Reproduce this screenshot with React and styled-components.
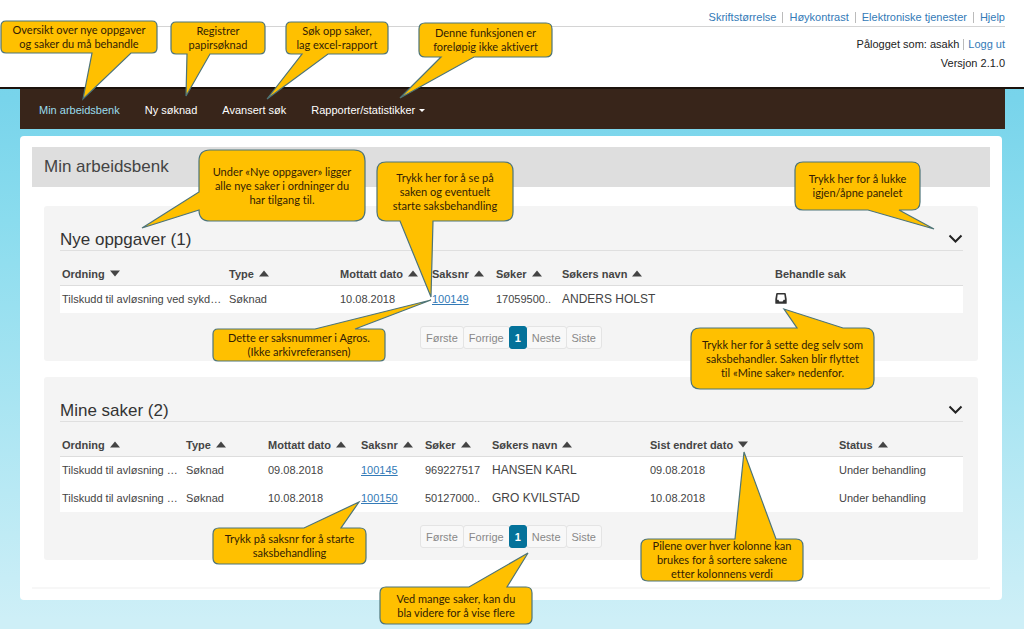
import React, { useState } from "react";
import styled, { createGlobalStyle } from "styled-components";

const GlobalStyle = createGlobalStyle`
  * {
    box-sizing: border-box;
  }

  body {
    margin: 0;
    font-family: "Liberation Sans", Arial, sans-serif;
    font-size: 11px;
    line-height: 14px;
    color: #222;
  }

  button {
    font: inherit;
    color: inherit;
    background: none;
    border: none;
    padding: 0;
    cursor: pointer;
  }
`;

// Hele siden, med blå bakgrunn under toppfeltet
const Page = styled.div`
  position: relative;
  display: flex;
  flex-direction: column;
  min-height: 100vh;
  overflow: hidden;
  background: linear-gradient(#74d2ea 0, #78d4eb 100px, #8adcee 220px, #ceeff7 620px);
`;

// Toppfelt
const Header = styled.header`
  display: flex;
  flex-direction: column;
  height: 89px;
  padding: 10px 19px 0 20px;
  background-color: #fff;
  border-bottom: 2px solid #1c120c;
`;

const TopLinks = styled.nav`
  display: flex;
  justify-content: flex-end;
  align-items: center;
  gap: 6px;
  height: 17px;
  padding-bottom: 2px;
  border-bottom: 1px solid #d4d4d4;
`;

const TextLink = styled.a`
  color: #337ab7;
  text-decoration: ${({ $underline }) => ($underline ? "underline" : "none")};
`;

const Separator = styled.span`
  width: 1px;
  height: 11px;
  background-color: #bbb;
`;

const UserInfo = styled.div`
  display: flex;
  flex-direction: column;
  align-items: flex-end;
  gap: 5px;
  padding-top: 10px;
`;

const UserRow = styled.div`
  display: flex;
  align-items: center;
  gap: 4px;
`;

// Hovedmeny
const Navbar = styled.nav`
  display: flex;
  align-items: center;
  gap: 25px;
  height: 40px;
  margin: 0 19px 0 20px;
  padding: 2px 19px 0;
  background-color: #38251a;
`;

const NavLink = styled.a`
  display: flex;
  align-items: center;
  gap: 4px;
  color: ${({ $active }) => ($active ? "#9bdcec" : "#fff")};
  text-decoration: none;
`;

// Hvit flate rundt innholdet
const Content = styled.main`
  margin: 7px 22px 29px 20px;
  padding: 11px 12px;
  background-color: #fff;
  border-radius: 4px;
`;

const PageTitle = styled.h1`
  margin: 0 0 19px;
  padding: 10px 12px;
  font-size: 17px;
  line-height: 20px;
  font-weight: normal;
  color: #444;
  background-color: #dedede;
`;

const PanelList = styled.div`
  display: flex;
  flex-direction: column;
  gap: 16px;
  padding: 0 12px 27px;
  border-bottom: 2px solid #f7f7f7;
`;

const PanelBox = styled.section`
  padding: 0 15px 12px 16px;
  background-color: #f4f4f4;
  border-radius: 3px;
`;

const PanelHeader = styled.div`
  display: flex;
  justify-content: space-between;
  align-items: flex-end;
  height: 45px;
  border-bottom: 1px solid #dfdfdf;
`;

const PanelTitle = styled.h2`
  margin: 0;
  font-size: 17px;
  line-height: 20px;
  font-weight: normal;
  color: #333;
`;

const ToggleButton = styled.button`
  display: flex;
  align-items: center;
  height: 22px;
`;

// Tabell
const Table = styled.table`
  width: 100%;
  table-layout: fixed;
  border-collapse: collapse;
  color: #444;

  th {
    height: 34px;
    padding: 12px 0 0 2px;
    text-align: left;
    white-space: nowrap;
    border-bottom: 1px solid #ddd;
  }

  td {
    height: 28px;
    padding: 0 0 0 2px;
    background-color: #fff;
    white-space: nowrap;
  }
`;

const Col = styled.col`
  width: ${({ $width }) => $width}px;
`;

const SortButton = styled.button`
  display: flex;
  align-items: center;
  gap: 5px;
  font-weight: bold;
`;

const Name = styled.span`
  font-size: 12px;
`;

const IconButton = styled.button`
  display: flex;
`;

// Sidenavigering under tabellen
const Pagination = styled.nav`
  display: flex;
  justify-content: center;
  margin-top: 13px;
`;

const PageButton = styled.button`
  z-index: ${({ $active }) => ($active ? 1 : 0)};
  height: 23px;
  padding: 0 5px;
  color: ${({ $active }) => ($active ? "#fff" : "#888")};
  font-weight: ${({ $active }) => ($active ? "bold" : "normal")};
  background-color: ${({ $active }) => ($active ? "#04729a" : "#f8f8f8")};
  border: 1px solid ${({ $active }) => ($active ? "#04729a" : "#e4e4e4")};
  border-radius: 3px;
  margin-left: -1px;
`;

// Gule forklaringsbobler som ligger over siden
const CalloutBox = styled.aside`
  position: absolute;
  z-index: 2;
  left: ${({ $x }) => $x}px;
  top: ${({ $y }) => $y}px;
  width: ${({ $w }) => $w}px;
  height: ${({ $h }) => $h}px;
  display: flex;
  align-items: center;
  justify-content: center;
  pointer-events: none;
`;

const CalloutShape = styled.svg`
  position: absolute;
  inset: 0;
  overflow: visible;
  fill: #ffc000;
  stroke: #4d7478;
`;

const CalloutText = styled.p`
  position: relative;
  margin: 0;
  font-family: Lato, "Open Sans", sans-serif;
  font-size: 11px;
  line-height: 14px;
  font-variant-ligatures: none;
  text-align: center;
  white-space: pre;
  color: #321c05;
`;

const newTasks = {
  title: "Nye oppgaver (1)",
  columns: [
    { label: "Ordning", width: 167, sort: "down" },
    { label: "Type", width: 111, sort: "up" },
    { label: "Mottatt dato", width: 92, sort: "up" },
    { label: "Saksnr", width: 64, sort: "up" },
    { label: "Søker", width: 66, sort: "up" },
    { label: "Søkers navn", width: 213, sort: "up" },
    { label: "Behandle sak", width: 190 },
  ],
  rows: [
    ["Tilskudd til avløsning ved sykd…", "Søknad", "10.08.2018", "100149", "17059500..", "ANDERS HOLST", ""],
  ],
};

const myCases = {
  title: "Mine saker (2)",
  columns: [
    { label: "Ordning", width: 124, sort: "up" },
    { label: "Type", width: 82, sort: "up" },
    { label: "Mottatt dato", width: 93, sort: "up" },
    { label: "Saksnr", width: 64, sort: "up" },
    { label: "Søker", width: 67, sort: "up" },
    { label: "Søkers navn", width: 158, sort: "up" },
    { label: "Sist endret dato", width: 189, sort: "down" },
    { label: "Status", width: 126, sort: "up" },
  ],
  rows: [
    ["Tilskudd til avløsning …", "Søknad", "09.08.2018", "100145", "969227517", "HANSEN KARL", "09.08.2018", "Under behandling"],
    ["Tilskudd til avløsning …", "Søknad", "10.08.2018", "100150", "50127000..", "GRO KVILSTAD", "10.08.2018", "Under behandling"],
  ],
};

// from/to er foten av pilen langs kanten, tip er spissen (alt i sidens koordinater)
const callouts = [
  { x: 1, y: 21, w: 156, h: 32, r: 5, side: "bottom", from: 92, to: 131, tip: [83, 99], text: "Oversikt over nye oppgaver\nog saker du må behandle" },
  { x: 171, y: 22, w: 94, h: 32, r: 5, side: "bottom", from: 187, to: 210, tip: [186, 96], text: "Registrer\npapirsøknad" },
  { x: 286, y: 22, w: 102, h: 32, r: 5, side: "bottom", from: 302, to: 328, tip: [267, 99], text: "Søk opp saker,\nlag excel-rapport" },
  { x: 419, y: 23, w: 133, h: 34, r: 6, side: "bottom", from: 441, to: 474, tip: [400, 98], text: "Denne funksjonen er\nforeløpig ikke aktivert" },
  { x: 199, y: 150, w: 166, h: 71, r: 11, side: "left", from: 192, to: 210, tip: [142, 228], text: "Under «Nye oppgaver» ligger\nalle nye saker i ordninger du\nhar tilgang til." },
  { x: 377, y: 162, w: 136, h: 59, r: 9, side: "bottom", from: 400, to: 433, tip: [431, 297], text: "Trykk her for å se på\nsaken og eventuelt\nstarte saksbehandling" },
  { x: 795, y: 162, w: 125, h: 48, r: 8, side: "bottom", from: 868, to: 899, tip: [934, 229], text: "Trykk her for å lukke\nigjen/åpne panelet" },
  { x: 213, y: 329, w: 172, h: 32, r: 5, side: "top", from: 315, to: 355, tip: [431, 300], text: "Dette er saksnummer i Agros.\n(Ikke arkivreferansen)" },
  { x: 691, y: 328, w: 183, h: 61, r: 9, side: "top", from: 797, to: 843, tip: [784, 309], text: "Trykk her for å sette deg selv som\nsaksbehandler. Saken blir flyttet\ntil «Mine saker» nedenfor." },
  { x: 213, y: 528, w: 153, h: 36, r: 6, side: "top", from: 304, to: 341, tip: [359, 502], text: "Trykk på saksnr for å starte\nsaksbehandling" },
  { x: 641, y: 539, w: 162, h: 42, r: 7, side: "top", from: 735, to: 776, tip: [744, 452], text: "Pilene over hver kolonne kan\nbrukes for å sortere sakene\netter kolonnens verdi" },
  { x: 380, y: 587, w: 152, h: 37, r: 6, side: "top", from: 469, to: 507, tip: [528, 553], text: "Ved mange saker, kan du\nbla videre for å vise flere" },
];

function calloutPath({ x, y, w, h, r, side, from, to, tip }) {
  const tx = tip[0] - x;
  const ty = tip[1] - y;
  const top = side === "top" ? `H${from - x}L${tx} ${ty}L${to - x} 0` : "";
  const bottom = side === "bottom" ? `H${to - x}L${tx} ${ty}L${from - x} ${h}` : "";
  const left = side === "left" ? `V${to - y}L${tx} ${ty}L0 ${from - y}` : "";
  return (
    `M${r} 0${top}H${w - r}Q${w} 0 ${w} ${r}V${h - r}Q${w} ${h} ${w - r} ${h}` +
    `${bottom}H${r}Q0 ${h} 0 ${h - r}${left}V${r}Q0 0 ${r} 0Z`
  );
}

function Callout({ item }) {
  return (
    <CalloutBox $x={item.x} $y={item.y} $w={item.w} $h={item.h}>
      <CalloutShape width={item.w} height={item.h} aria-hidden="true">
        <path d={calloutPath(item)} strokeWidth="1.2" />
      </CalloutShape>
      <CalloutText>{item.text}</CalloutText>
    </CalloutBox>
  );
}

function SortIcon({ direction }) {
  return (
    <svg width="10" height="8" viewBox="0 0 10 8" fill="#444" aria-hidden="true">
      <path d={direction === "up" ? "M0 6.5L5 .5L10 6.5Z" : "M0 .5H10L5 6.5Z"} />
    </svg>
  );
}

function InboxIcon() {
  return (
    <svg width="12" height="12" viewBox="0 0 12 12" fill="#333" aria-hidden="true">
      <path
        fillRule="evenodd"
        d="M2 0H10Q10.6 0 10.8.7L11.7 6V10.2Q11.7 10.8 11 10.8H1Q.3 10.8.3 10.2V6L1.2.7Q1.4 0 2 0ZM2.7 1.4L2 6.8H3.3L4.4 8.6H7.6L8.7 6.8H10L9.3 1.4Z"
      />
    </svg>
  );
}

function Cell({ label, value }) {
  if (label === "Saksnr") return <TextLink href="#sak" $underline>{value}</TextLink>;
  if (label === "Søkers navn") return <Name>{value}</Name>;
  if (label === "Behandle sak") {
    return (
      <IconButton aria-label="Behandle sak">
        <InboxIcon />
      </IconButton>
    );
  }
  return value;
}

function Panel({ title, columns, rows }) {
  const [open, setOpen] = useState(true);

  return (
    <PanelBox>
      <PanelHeader>
        <PanelTitle>{title}</PanelTitle>
        <ToggleButton aria-label="Lukk/åpne panelet" aria-expanded={open} onClick={() => setOpen(!open)}>
          <svg width="15" height="10" viewBox="0 0 15 10" fill="none" stroke="#222" strokeWidth="2" aria-hidden="true">
            <path d="M1.5 1.5L7.5 7.5L13.5 1.5" />
          </svg>
        </ToggleButton>
      </PanelHeader>
      {open && (
        <>
          <Table>
            <colgroup>
              {columns.map((col) => (
                <Col key={col.label} $width={col.width} />
              ))}
            </colgroup>
            <thead>
              <tr>
                {columns.map((col) => (
                  <th key={col.label}>
                    {col.sort ? (
                      <SortButton>
                        {col.label}
                        <SortIcon direction={col.sort} />
                      </SortButton>
                    ) : (
                      col.label
                    )}
                  </th>
                ))}
              </tr>
            </thead>
            <tbody>
              {rows.map((row) => (
                <tr key={row[3]}>
                  {columns.map((col, i) => (
                    <td key={col.label}>
                      <Cell label={col.label} value={row[i]} />
                    </td>
                  ))}
                </tr>
              ))}
            </tbody>
          </Table>
          <Pagination aria-label={`Sider for ${title}`}>
            <PageButton>Første</PageButton>
            <PageButton>Forrige</PageButton>
            <PageButton $active>1</PageButton>
            <PageButton>Neste</PageButton>
            <PageButton>Siste</PageButton>
          </Pagination>
        </>
      )}
    </PanelBox>
  );
}

function App() {
  return (
    <Page>
      <GlobalStyle />
      <Header>
        <TopLinks>
          <TextLink href="#skrift">Skriftstørrelse</TextLink>
          <Separator />
          <TextLink href="#kontrast">Høykontrast</TextLink>
          <Separator />
          <TextLink href="#tjenester">Elektroniske tjenester</TextLink>
          <Separator />
          <TextLink href="#hjelp">Hjelp</TextLink>
        </TopLinks>
        <UserInfo>
          <UserRow>
            Pålogget som: asakh
            <Separator />
            <TextLink href="#loggut">Logg ut</TextLink>
          </UserRow>
          <UserRow>Versjon 2.1.0</UserRow>
        </UserInfo>
      </Header>

      <Navbar>
        <NavLink href="#arbeidsbenk" $active>Min arbeidsbenk</NavLink>
        <NavLink href="#soknad">Ny søknad</NavLink>
        <NavLink href="#sok">Avansert søk</NavLink>
        <NavLink href="#rapporter">
          Rapporter/statistikker
          <svg width="6" height="3" viewBox="0 0 6 3" fill="#fff" aria-hidden="true">
            <path d="M0 0H6L3 3Z" />
          </svg>
        </NavLink>
      </Navbar>

      <Content>
        <PageTitle>Min arbeidsbenk</PageTitle>
        <PanelList>
          <Panel {...newTasks} />
          <Panel {...myCases} />
        </PanelList>
      </Content>

      {callouts.map((item) => (
        <Callout key={item.text} item={item} />
      ))}
    </Page>
  );
}

export default App;
